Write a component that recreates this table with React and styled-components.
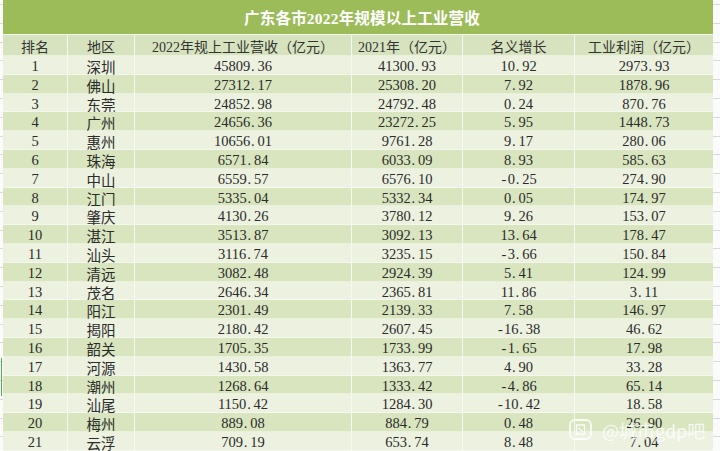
import React from "react";
import styled, { createGlobalStyle } from "styled-components";

const Global = createGlobalStyle`
  html, body { margin: 0; padding: 0; background: #ffffff; }
  body { width: 720px; height: 451px; overflow: hidden; }
`;

const rows = [
  ["1", "深圳", "45809.36", "41300.93", "10.92", "2973.93"],
  ["2", "佛山", "27312.17", "25308.20", "7.92", "1878.96"],
  ["3", "东莞", "24852.98", "24792.48", "0.24", "870.76"],
  ["4", "广州", "24656.36", "23272.25", "5.95", "1448.73"],
  ["5", "惠州", "10656.01", "9761.28", "9.17", "280.06"],
  ["6", "珠海", "6571.84", "6033.09", "8.93", "585.63"],
  ["7", "中山", "6559.57", "6576.10", "-0.25", "274.90"],
  ["8", "江门", "5335.04", "5332.34", "0.05", "174.97"],
  ["9", "肇庆", "4130.26", "3780.12", "9.26", "153.07"],
  ["10", "湛江", "3513.87", "3092.13", "13.64", "178.47"],
  ["11", "汕头", "3116.74", "3235.15", "-3.66", "150.84"],
  ["12", "清远", "3082.48", "2924.39", "5.41", "124.99"],
  ["13", "茂名", "2646.34", "2365.81", "11.86", "3.11"],
  ["14", "阳江", "2301.49", "2139.33", "7.58", "146.97"],
  ["15", "揭阳", "2180.42", "2607.45", "-16.38", "46.62"],
  ["16", "韶关", "1705.35", "1733.99", "-1.65", "17.98"],
  ["17", "河源", "1430.58", "1363.77", "4.90", "33.28"],
  ["18", "潮州", "1268.64", "1333.42", "-4.86", "65.14"],
  ["19", "汕尾", "1150.42", "1284.30", "-10.42", "18.58"],
  ["20", "梅州", "889.08", "884.79", "0.48", "26.90"],
  ["21", "云浮", "709.19", "653.74", "8.48", "7.04"],
];

const headers = [
  "排名",
  "地区",
  "2022年规上工业营收（亿元）",
  "2021年（亿元）",
  "名义增长",
  "工业利润（亿元）",
];

const Page = styled.div`
  display: flex;
  width: 720px;
  height: 451px;
  position: relative;
  font-family: "Liberation Serif", "Noto Sans CJK SC", serif;
  color: #2b2b2b;
`;

const Strip = styled.div`
  width: ${(p) => p.$w}px;
  flex: none;
  background-color: #fbfbfb;
  background-image: repeating-linear-gradient(
    to bottom,
    transparent 0px,
    transparent 17.8px,
    #d9d9d9 17.8px,
    #d9d9d9 18.8px
  );
  background-position: 0 ${(p) => p.$offset}px;
  position: relative;
`;

const SelMark = styled.div`
  position: absolute;
  left: 1px;
  top: 358px;
  width: 1px;
  height: 38px;
  background: #4caf50;
`;

const Sheet = styled.div`
  width: 710px;
  flex: none;
  display: flex;
  flex-direction: column;
`;

const Title = styled.div`
  height: 34px;
  background: #9cbc5a;
  display: flex;
  align-items: center;
  justify-content: center;
  color: #ffffff;
  font-size: 15.5px;
  font-weight: 700;
  letter-spacing: 0.2px;
  border-bottom: 1px solid #f3f6ec;
  padding-left: 8px;
`;

const Grid = styled.div`
  display: grid;
  grid-template-columns: 65px 67px 217px 111px 112px 138px;
  height: ${(p) => p.$h}px;
  background: ${(p) => p.$bg};
  box-shadow: inset 0 -1px 0 rgba(255, 255, 255, 0.45);
`;

const Cell = styled.div`
  display: flex;
  align-items: center;
  justify-content: center;
  font-size: 14.5px;
  white-space: nowrap;
  border-right: 1px solid rgba(250, 252, 245, 0.85);
  &:last-child {
    border-right: none;
  }
`;

const HeadCell = styled(Cell)`
  font-size: 14px;
  color: #333333;
`;

const Dot = styled.span`
  display: inline-block;
  width: 0.5em;
  text-align: left;
  padding-left: 0.06em;
  box-sizing: border-box;
`;

const Minus = styled.span`
  display: inline-block;
  width: 0.5em;
  text-align: center;
`;

const Watermark = styled.div`
  position: absolute;
  left: 569px;
  top: 419px;
  display: flex;
  align-items: center;
  gap: 10px;
  color: rgba(255, 255, 255, 0.82);
  font-family: "Noto Sans CJK SC", sans-serif;
  font-size: 18px;
  line-height: 1;
  pointer-events: none;
`;

const Num = ({ v }) => {
  const neg = v.startsWith("-");
  const s = neg ? v.slice(1) : v;
  const [a, b] = s.split(".");
  return (
    <span>
      {neg && <Minus>-</Minus>}
      {a}
      {b !== undefined && (
        <>
          <Dot>.</Dot>
          {b}
        </>
      )}
    </span>
  );
};

export default function App() {
  return (
    <>
      <Global />
      <Page>
        <Strip $w={3} $offset={5}>
          <SelMark />
        </Strip>
        <Sheet>
          <Title>广东各市2022年规模以上工业营收</Title>
          <Grid $h={21} $bg="#d7e3be">
            {headers.map((h) => (
              <HeadCell key={h}>{h}</HeadCell>
            ))}
          </Grid>
          {rows.map((r, i) => (
            <Grid key={r[0]} $h={18.8} $bg={i % 2 === 0 ? "#ecf1e0" : "#d8e5bf"}>
              <Cell>{r[0]}</Cell>
              <Cell>{r[1]}</Cell>
              <Cell>
                <Num v={r[2]} />
              </Cell>
              <Cell>
                <Num v={r[3]} />
              </Cell>
              <Cell>
                <Num v={r[4]} />
              </Cell>
              <Cell>
                <Num v={r[5]} />
              </Cell>
            </Grid>
          ))}
        </Sheet>
        <Strip $w={7} $offset={5} />
        <Watermark>
          <svg width="23" height="21" viewBox="0 0 23 21">
            <rect x="1" y="1" width="21" height="19" rx="5" fill="none" stroke="rgba(255,255,255,0.85)" strokeWidth="1.8" />
            <path d="M7.5 6 L15.5 6 L15.5 15 L7.5 15 Z M9.5 9 L13.5 12.5" fill="none" stroke="rgba(255,255,255,0.85)" strokeWidth="1.4" />
          </svg>
          <span>@城市gdp吧</span>
        </Watermark>
      </Page>
    </>
  );
}
